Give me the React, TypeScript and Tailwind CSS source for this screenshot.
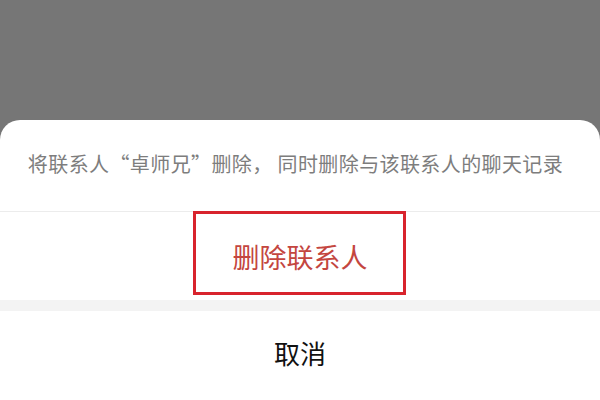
const font = "font-['Noto_Sans_CJK_SC','Noto_Sans',sans-serif]";

export default function App() {
  return (
    <div className={`w-[600px] h-[400px] bg-[#767676] flex flex-col overflow-hidden ${font}`}>
      {/* dimmed page behind the sheet */}
      <div className="h-[120px] shrink-0" />

      {/* action sheet */}
      <div className="flex-1 bg-white rounded-t-[20px] flex flex-col">
        <div className="h-[92px] flex items-center justify-center pb-[4px] pr-[9px] border-b border-[#ececec]">
          <p className="text-[20px] leading-none text-[#7d7d7d] tracking-[0.4px]">
            将联系人“卓师兄”删除， 同时删除与该联系人的聊天记录
          </p>
        </div>

        <div className="relative h-[88px] flex items-center justify-center">
          <span className="text-[27px] leading-none text-[#c4463f]">删除联系人</span>
          {/* highlight frame */}
          <div className="absolute left-[193px] top-[-1px] w-[213px] h-[84px] border-[3px] border-[#d8232d]" />
        </div>

        <div className="h-[11px] bg-[#f3f3f3]" />

        <div className="flex-1 flex items-center justify-center pb-[5px]">
          <span className="text-[26px] leading-none text-[#111111]">取消</span>
        </div>
      </div>
    </div>
  );
}
